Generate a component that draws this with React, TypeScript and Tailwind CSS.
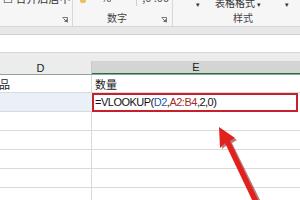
import React from 'react';

const font = { fontFamily: '"Noto Sans CJK SC", "Liberation Sans", sans-serif' };

const Launcher = () => (
  <svg width="6" height="6" viewBox="0 0 6 6" className="block">
    <path d="M0.5 0.5 H5.5 V5.5" fill="none" stroke="#777" strokeWidth="1" />
    <path d="M1.5 1.5 L4.5 4.5 M2.5 4.5 H4.5 V2.5" fill="none" stroke="#666" strokeWidth="1" />
  </svg>
);

const Row = ({ h, children, border = true }: { h: string; children?: React.ReactNode; border?: boolean }) => (
  <div className={`flex ${h} ${border ? 'border-b border-[#dadada]' : ''}`}>{children}</div>
);

export default function App() {
  return (
    <div className="relative w-[300px] h-[200px] overflow-hidden bg-white" style={font}>
      {/* Ribbon */}
      <div className="flex h-[27px] bg-[#f6f6f6] border-b border-[#d6d6d6]">
        {/* alignment group (cut) */}
        <div className="w-[73px] shrink-0 border-r border-[#d8d8d8] flex flex-col">
          <div className="h-[5px] overflow-hidden">
            <div className="-mt-[8px] pl-[3px] text-[11px] leading-[12px] text-[#333] whitespace-nowrap">☐ 合并后居中 ▾</div>
          </div>
          <div className="flex-1 flex items-end justify-end pr-[4px] pb-[3px]">
            <Launcher />
          </div>
        </div>
        {/* number group */}
        <div className="w-[100px] shrink-0 border-r border-[#d8d8d8] flex flex-col">
          <div className="h-[6px] overflow-hidden flex items-start">
            <div className="ml-[7px] w-[6px] h-[3px] bg-[#f0c060] rounded-b-[2px]" />
            <div className="-mt-[8px] ml-[15px] text-[11px] leading-[11px] text-[#444] whitespace-nowrap">%</div>
            <div className="ml-[25px] h-[6px] border-l border-[#cfcfcf]" />
            <div className="-mt-[8px] ml-[5px] text-[11px] leading-[11px] text-[#555] whitespace-nowrap">,0 .00</div>
          </div>
          <div className="flex-1 flex items-end pb-[2px]">
            <div className="ml-[34px] text-[10px] leading-[13px] text-[#444]">数字</div>
            <div className="ml-auto mr-[5px] mb-[1px]">
              <Launcher />
            </div>
          </div>
        </div>
        {/* styles group */}
        <div className="flex-1 flex flex-col">
          <div className="h-[9px] overflow-hidden flex items-start text-[#333]">
            <div className="ml-[23px] mt-[1px] text-[7px] leading-[7px]">▾</div>
            <div className="-mt-[3px] ml-[15px] text-[10px] leading-[11px] whitespace-nowrap">
              表格格式 <span className="text-[7px]">▾</span>
            </div>
            <div className="ml-[24px] mt-[1px] text-[7px] leading-[7px]">▾</div>
          </div>
          <div className="flex-1 flex items-end pb-[2px]">
            <div className="ml-[60px] text-[10px] leading-[13px] text-[#444]">样式</div>
          </div>
        </div>
      </div>

      {/* gray band */}
      <div className="h-[8px] bg-[#e8e8e8] border-b border-[#d0d0d0]" />

      {/* formula bar */}
      <div className="h-[18px] bg-white border-b border-[#d6d6d6]" />

      {/* gap above headers */}
      <div className="h-[8px] bg-[#ececec]" />

      {/* column headers */}
      <div className="flex h-[14px] border-b border-[#8fa597]">
        <div className="w-[92px] shrink-0 bg-[#ececec] border-r border-[#c8c8c8] flex items-end justify-center pr-[10px]">
          <span className="text-[11px] leading-[12px] text-[#222]" style={{ fontFamily: '"Liberation Sans", sans-serif' }}>D</span>
        </div>
        <div className="flex-1 bg-[#d4d4d4] flex items-end justify-center border-b border-[#217346]">
          <span className="text-[11px] leading-[12px] text-[#222]" style={{ fontFamily: '"Liberation Sans", sans-serif' }}>E</span>
        </div>
      </div>

      {/* row 1 */}
      <Row h="h-[18px]">
        <div className="w-[92px] shrink-0 border-r border-[#dadada] overflow-hidden flex items-center">
          <span className="-ml-[12px] text-[11px] leading-[14px] text-[#222] whitespace-nowrap">产品</span>
        </div>
        <div className="flex-1 flex items-center pl-[3px]">
          <span className="text-[11px] leading-[14px] text-[#222]">数量</span>
        </div>
      </Row>

      {/* row 2 */}
      <Row h="h-[19px]" border={false}>
        <div className="w-[92px] shrink-0 bg-[#eaf0f8] border-b border-[#dadada]" />
        <div className="w-[206px] shrink-0 border-2 border-[#c4212c] flex items-center pl-[1px]">
          <span
            className="text-[11px] leading-[13px] tracking-[-0.5px] text-[#111] whitespace-nowrap"
            style={{ fontFamily: '"Liberation Sans", sans-serif' }}
          >
            =VLOOKUP(<span className="text-[#2a56a8]">D2</span>,<span className="text-[#a32b2b]">A2:B4</span>,2,0)
          </span>
        </div>
      </Row>

      {/* empty rows */}
      {[0, 1, 2, 3, 4].map((i) => (
        <Row key={i} h="h-[19px]">
          <div className="w-[92px] shrink-0 border-r border-[#dadada]" />
          <div className="flex-1" />
        </Row>
      ))}

      {/* red arrow */}
      <svg className="absolute left-0 top-0 pointer-events-none" width="300" height="200" viewBox="0 0 300 200">
        <polygon points="221,129 237,140 232,143 261,202 256,204 227,145 222,149" fill="#7a1010" opacity="0.55" />
        <polygon points="219,127 235,138 230,141 259,202 254,204 225,143 220,148" fill="#e3211c" />
      </svg>
    </div>
  );
}
